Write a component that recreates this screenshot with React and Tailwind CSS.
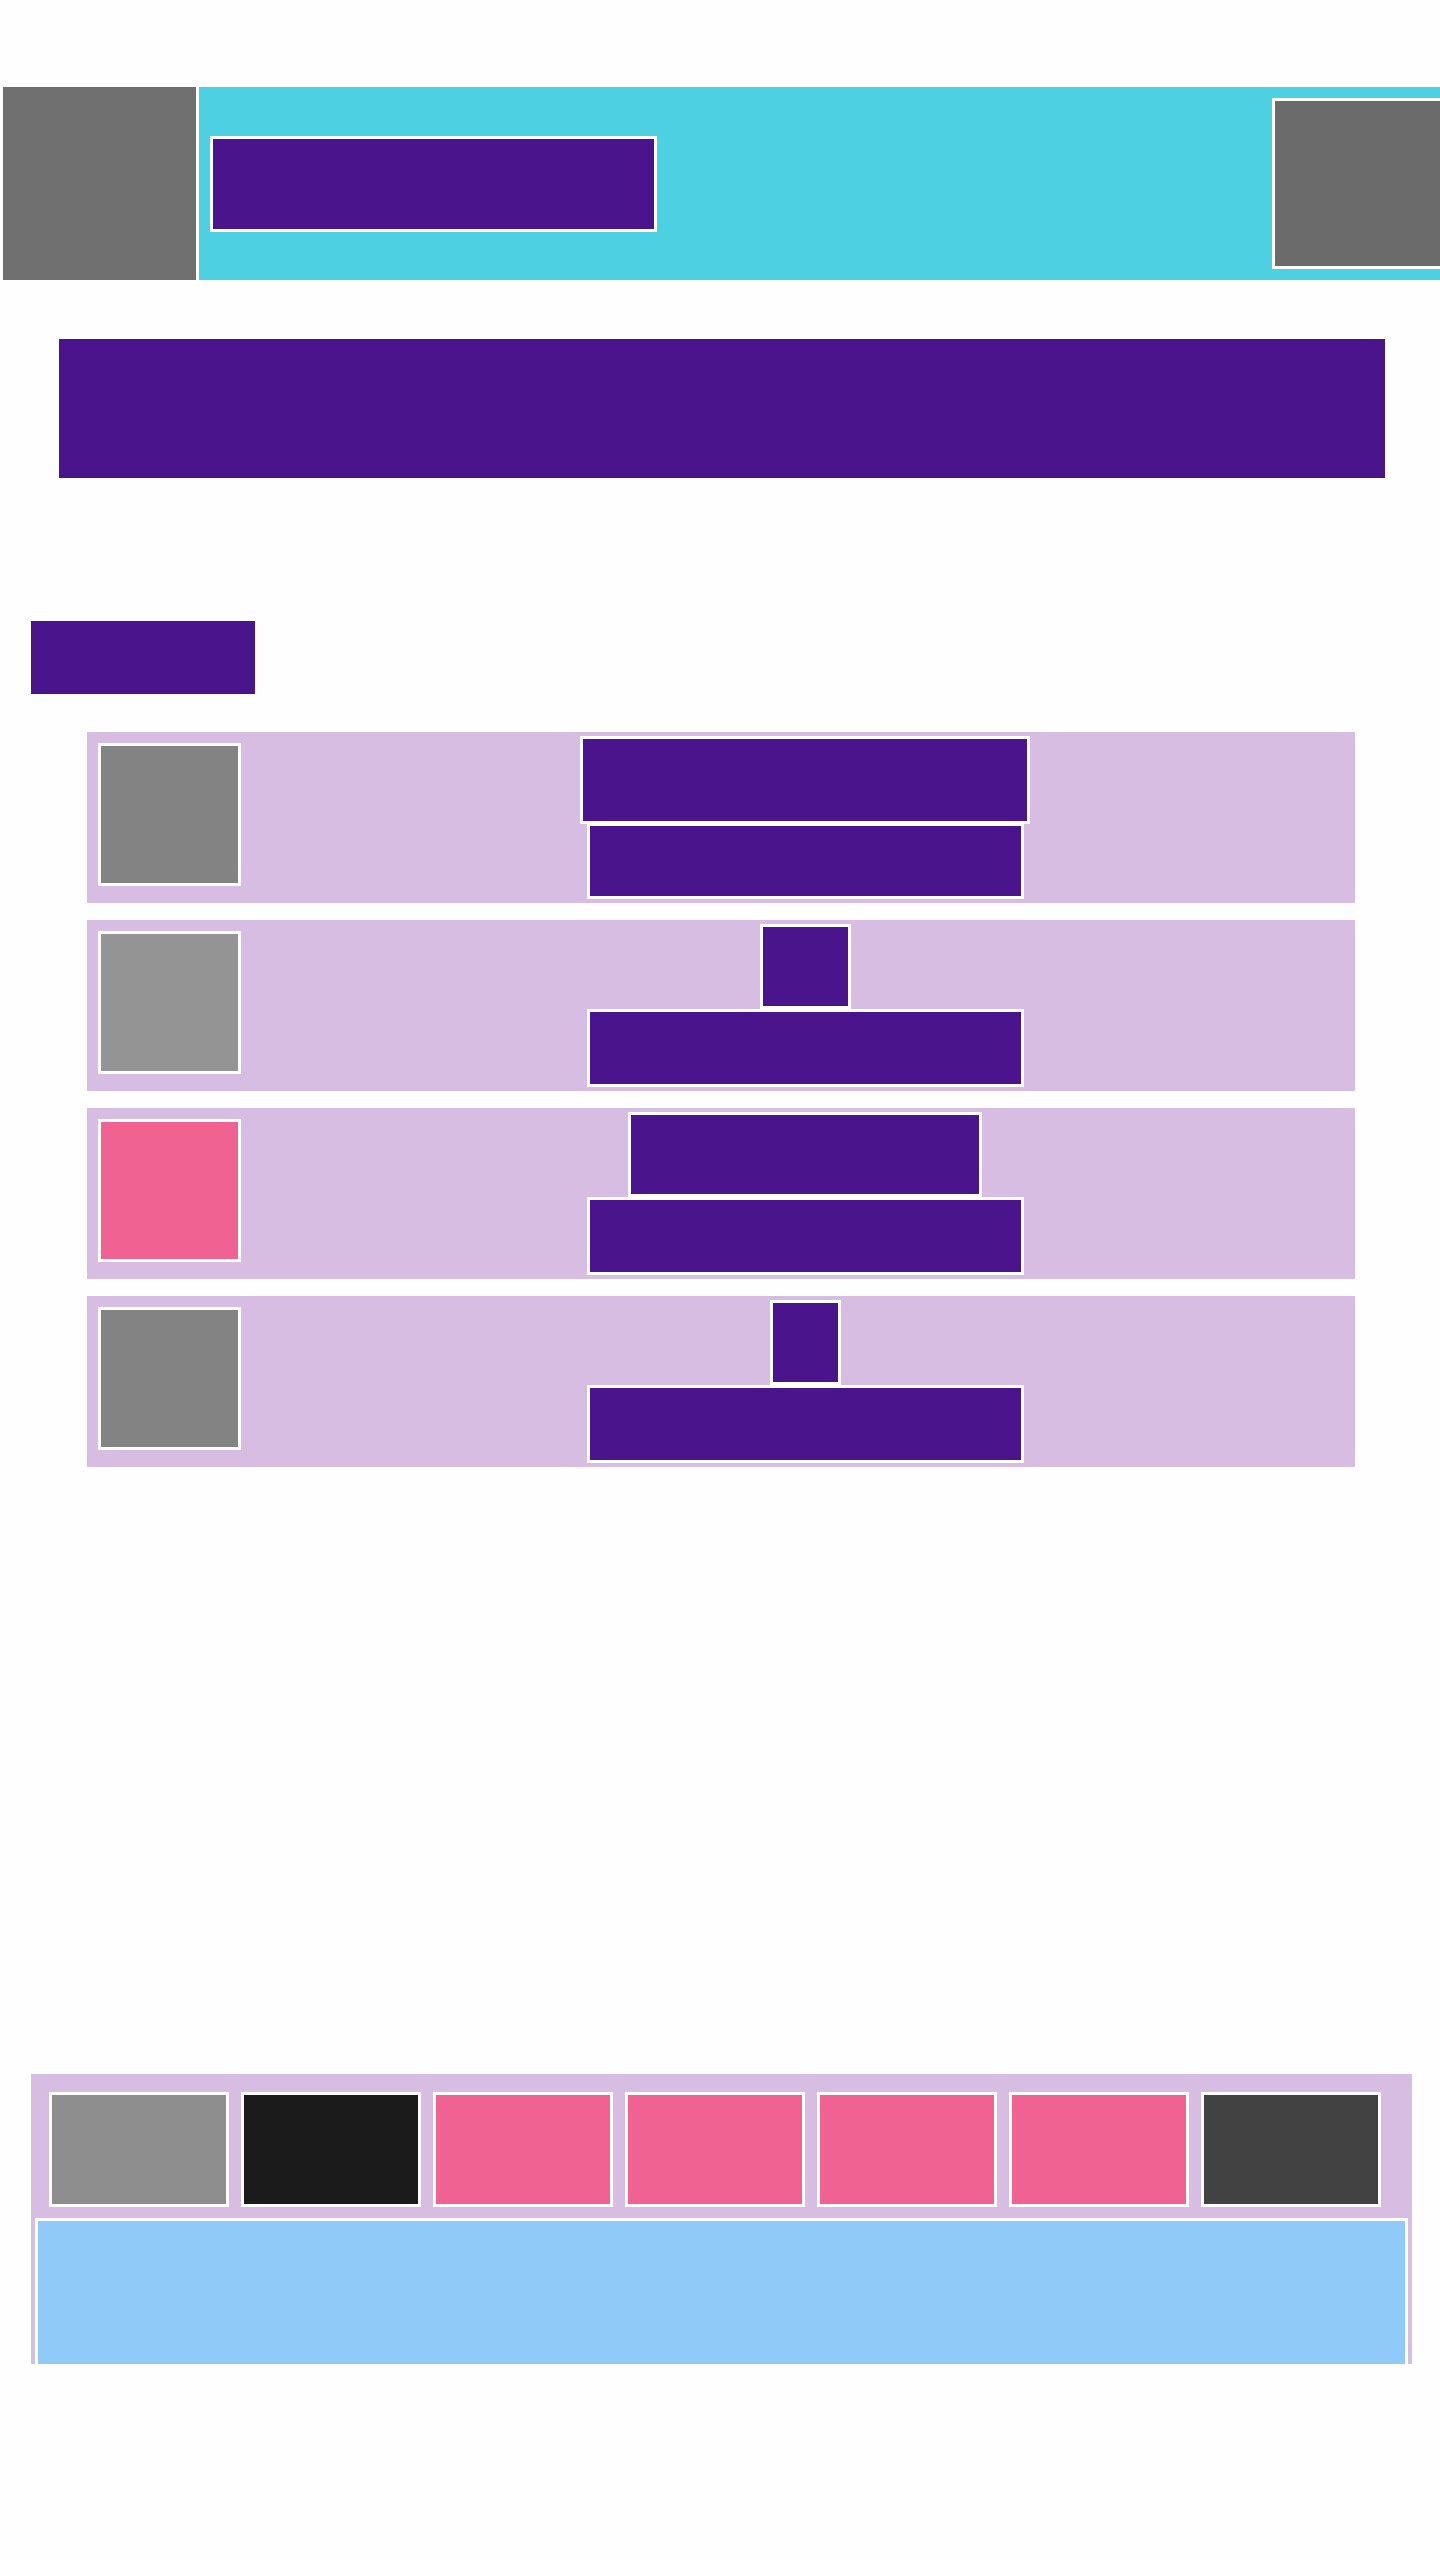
import React from 'react';

const rows = [
  { thumb: 'bg-[#838383]', top: 'w-[450px] h-[88px]', bottom: 'h-[76px] -mt-px' },
  { thumb: 'bg-[#949494]', top: 'w-[91px] h-[85px]', bottom: 'h-[78px]' },
  { thumb: 'bg-[#f06292]', top: 'w-[354px] h-[85px]', bottom: 'h-[78px]' },
  { thumb: 'bg-[#838383]', top: 'w-[71px] h-[85px]', bottom: 'h-[78px]' },
];

const tiles = [
  'bg-[#8e8e8e]',
  'bg-[#1b1b1b]',
  'bg-[#f06292]',
  'bg-[#f06292]',
  'bg-[#f06292]',
  'bg-[#f06292]',
  'bg-[#424242]',
];

const ListRow = ({ row }) => (
  <div className="flex h-[171px] bg-[#d7bde2] pl-[11px]">
    <div className={`mt-[11px] w-[143px] h-[143px] shrink-0 border-[3px] border-white ${row.thumb}`} />
    <div className="flex-1 ml-[14px] flex flex-col items-center justify-center">
      <div className={`${row.top} bg-[#4a148c] border-[3px] border-white`} />
      <div className={`w-[437px] ${row.bottom} bg-[#4a148c] border-[3px] border-white`} />
    </div>
  </div>
);

export default function App() {
  return (
    <div className="w-[1440px] h-[2560px] overflow-hidden bg-[#fefefe] pt-[87px]">
      {/* Header */}
      <header className="flex h-[193px] gap-[3px] pl-[3px]">
        <div className="w-[193px] shrink-0 bg-[#707070]" />
        <div className="w-[1241px] shrink-0 bg-[#4dd0e1] flex items-center pl-[11px]">
          <div className="w-[447px] h-[96px] shrink-0 bg-[#4a148c] border-[3px] border-white" />
          <div className="ml-[615px] w-[200px] h-[171px] shrink-0 bg-[#6b6b6b] border-[3px] border-white" />
        </div>
      </header>

      {/* Banner */}
      <section className="mt-[59px] ml-[59px] w-[1326px] h-[139px] bg-[#4a148c]" />

      {/* Section title */}
      <div className="mt-[143px] ml-[31px] w-[224px] h-[73px] bg-[#4a148c]" />

      {/* List */}
      <div className="mt-[38px] ml-[87px] w-[1268px] flex flex-col gap-[17px]">
        {rows.map((row, i) => (
          <ListRow key={i} row={row} />
        ))}
      </div>

      {/* Bottom panel */}
      <section className="mt-[607px] ml-[31px] w-[1381px] h-[290px] overflow-hidden bg-[#d7bde2]">
        <div className="flex gap-[12px] pl-[18px] pt-[18px]">
          {tiles.map((c, i) => (
            <div key={i} className={`w-[180px] h-[115px] shrink-0 border-[3px] border-white ${c}`} />
          ))}
        </div>
        <div className="mt-[11px] mx-[4px] h-[220px] bg-[#90caf9] border-[3px] border-white" />
      </section>
    </div>
  );
}
